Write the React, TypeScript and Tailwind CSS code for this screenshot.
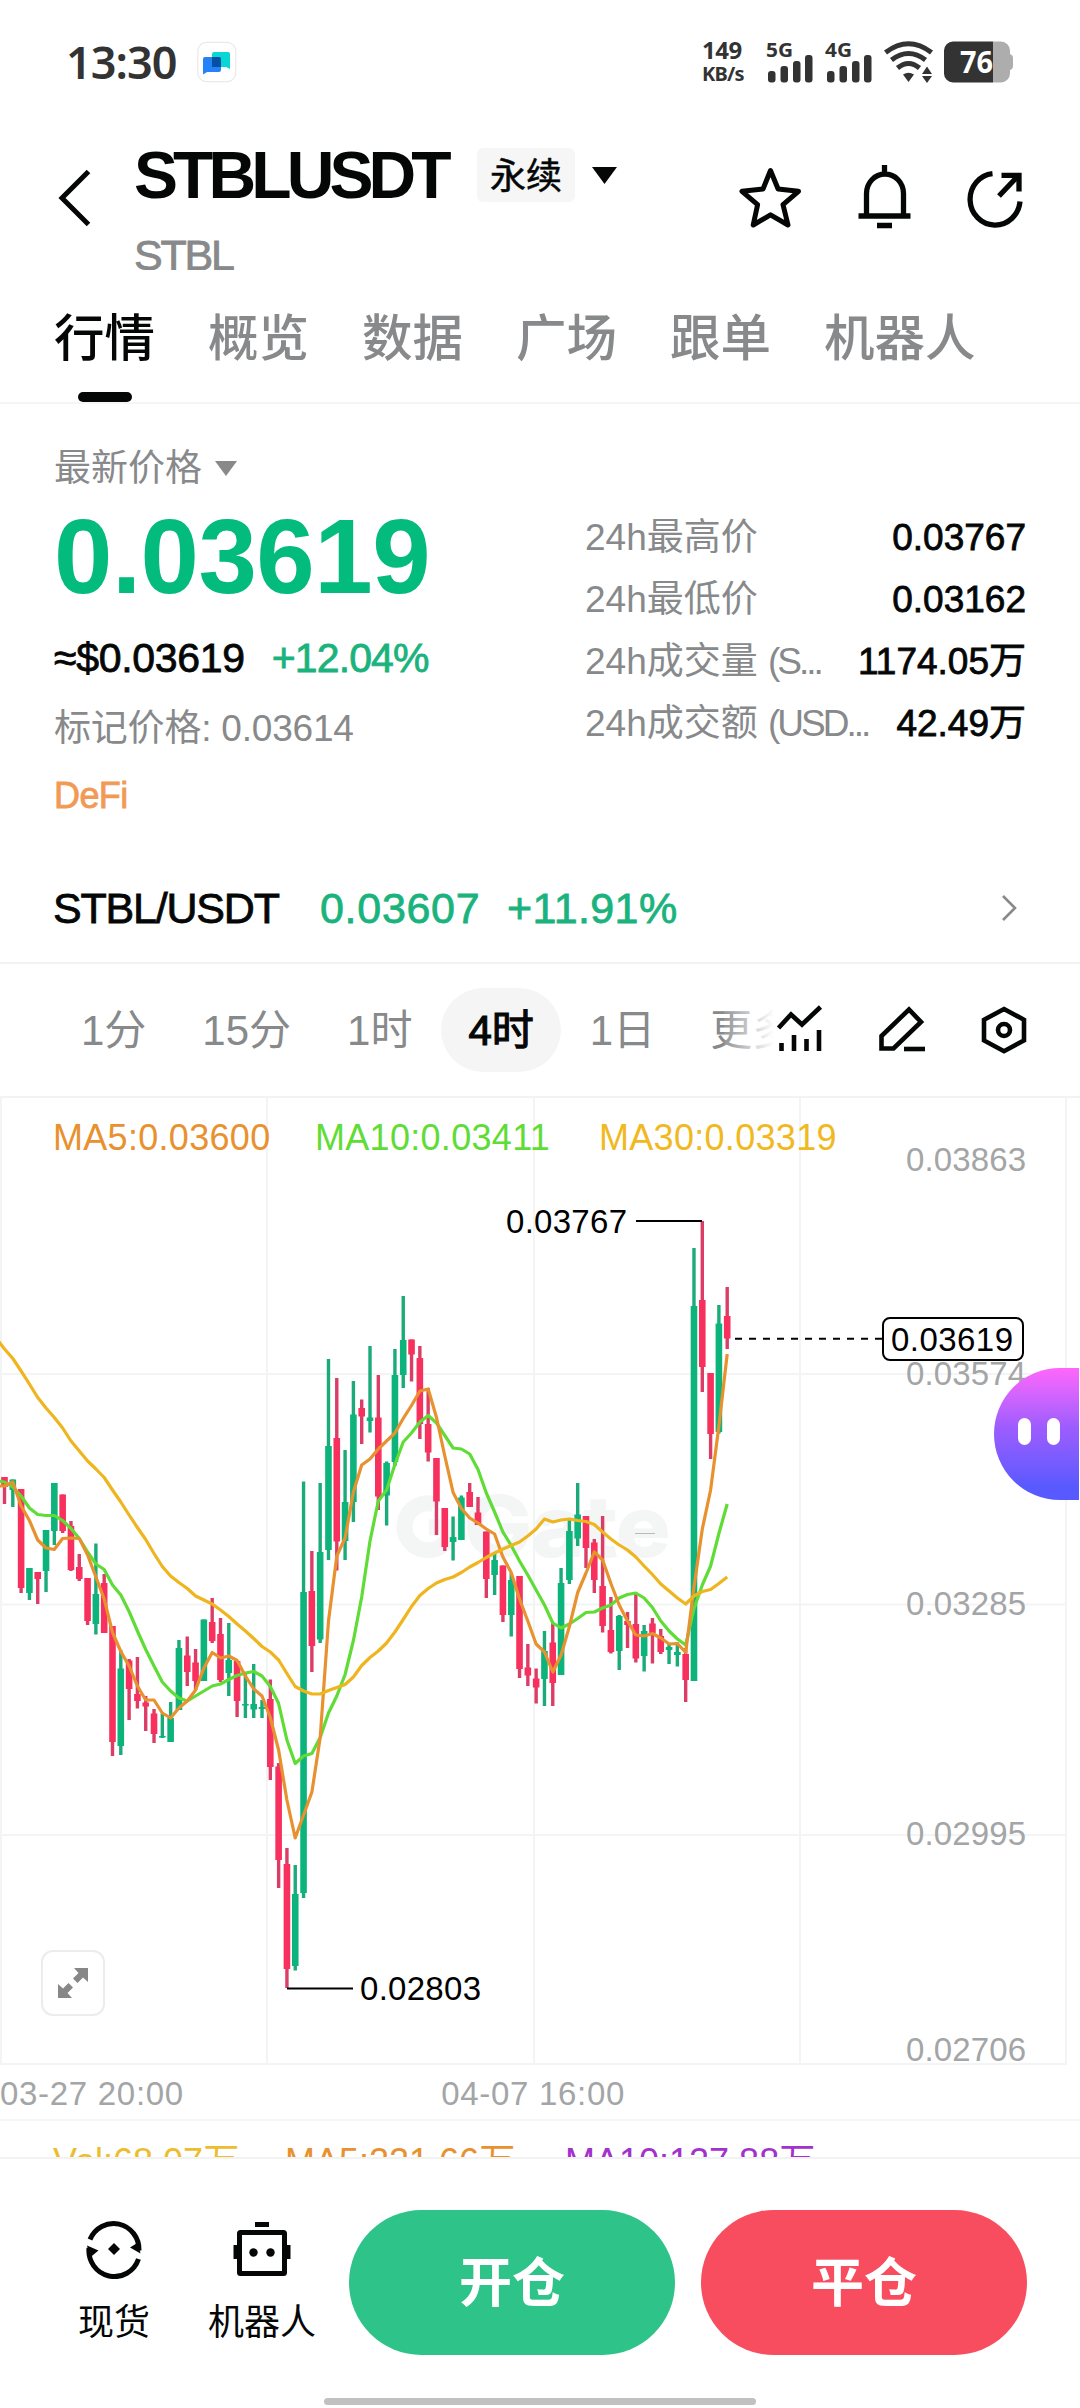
import React from 'react';
import clsx from 'clsx';

const UP = '#0cb47c';
const DOWN = '#f8305d';

// [direction, high, body top, body bottom, low]
type Candle = ['u' | 'd', number, number, number, number];

const CANDLES: Candle[] = [
  ['d', 1477, 1477, 1487, 1504], ['u', 1479.5, 1479.5, 1490, 1507], ['d', 1489, 1489, 1588, 1593], ['u', 1568, 1568, 1593, 1600],
  ['d', 1572, 1572, 1579, 1604], ['u', 1530, 1530, 1571, 1592], ['u', 1483, 1483, 1531, 1545], ['d', 1494.5, 1494.5, 1531, 1533],
  ['d', 1521, 1526, 1570, 1571], ['d', 1554, 1567, 1579, 1581], ['d', 1578, 1578, 1621, 1625], ['u', 1543.5, 1594, 1624, 1634.5],
  ['d', 1574, 1583, 1633, 1633], ['d', 1626, 1626, 1742, 1756], ['u', 1650, 1668.5, 1746, 1755], ['d', 1659, 1660.5, 1689, 1720],
  ['d', 1657, 1694, 1701, 1708.5], ['d', 1696, 1702.5, 1706.5, 1731], ['d', 1709, 1713.5, 1734, 1743], ['u', 1713.5, 1736, 1737.5, 1738],
  ['u', 1702, 1718, 1742, 1742], ['u', 1640, 1648, 1710, 1710], ['d', 1636.5, 1655.5, 1672, 1686], ['d', 1649, 1662.5, 1681, 1690],
  ['u', 1619.5, 1619.5, 1681, 1681], ['d', 1598, 1622, 1641, 1643], ['d', 1618, 1634, 1680, 1682], ['u', 1623, 1660, 1673, 1696],
  ['d', 1661, 1661, 1701, 1717], ['u', 1674, 1704, 1705.5, 1718], ['u', 1664, 1704, 1709.5, 1718], ['u', 1700, 1707, 1709, 1718],
  ['d', 1679.5, 1699, 1767, 1780], ['d', 1763, 1766.5, 1860, 1888], ['d', 1848, 1864, 1969, 1988], ['u', 1865, 1894, 1966, 1970.5],
  ['u', 1481.5, 1592, 1893, 1898], ['d', 1551, 1591, 1646, 1672], ['u', 1483, 1552, 1639.5, 1643], ['u', 1359, 1446, 1550, 1560],
  ['d', 1378, 1438, 1541.5, 1570.5], ['u', 1450, 1502, 1541, 1560], ['u', 1381, 1414.5, 1502, 1522], ['d', 1399.5, 1408, 1416.5, 1444],
  ['u', 1346, 1417.5, 1421, 1432.5], ['d', 1375, 1417.5, 1496.5, 1510], ['u', 1461.5, 1463, 1495.5, 1525.5], ['u', 1349, 1375, 1462, 1466],
  ['u', 1296, 1340, 1375, 1388], ['d', 1339.5, 1339.5, 1354.5, 1381.5], ['d', 1346, 1358, 1424, 1439], ['d', 1388, 1424, 1452.5, 1461.5],
  ['d', 1458, 1458, 1501.5, 1535], ['d', 1508, 1508, 1547, 1551], ['u', 1516.5, 1537, 1542, 1560.5], ['u', 1495.5, 1497.5, 1540, 1540],
  ['d', 1483, 1492, 1507, 1507], ['d', 1497, 1512.5, 1525, 1525], ['d', 1531.5, 1531.5, 1579, 1598], ['u', 1553, 1560, 1575, 1595],
  ['d', 1565.5, 1565.5, 1615, 1622], ['u', 1573, 1580, 1615, 1636.5], ['d', 1576, 1576, 1669, 1678], ['d', 1644, 1667.5, 1675.5, 1686],
  ['d', 1668.5, 1678.5, 1687.5, 1703.5], ['u', 1631, 1651, 1679, 1706], ['d', 1623, 1642.5, 1683, 1706], ['u', 1568, 1583, 1675, 1675],
  ['u', 1519, 1531, 1580, 1584], ['u', 1483, 1514.5, 1538.5, 1546], ['d', 1516, 1516, 1548, 1568], ['d', 1539, 1542.5, 1580, 1593],
  ['d', 1516, 1586, 1626, 1632.5], ['d', 1597, 1630, 1652, 1653.5], ['u', 1615, 1616, 1651, 1670], ['d', 1612, 1621, 1625, 1648],
  ['d', 1594, 1624, 1658.5, 1662.5], ['u', 1625, 1631, 1656, 1671.5], ['d', 1618, 1623.5, 1633, 1663.5], ['d', 1629, 1636, 1652, 1654],
  ['u', 1644, 1647, 1650, 1664], ['u', 1642.5, 1652, 1655, 1666.5], ['d', 1648, 1654, 1680, 1702], ['u', 1248, 1306, 1681, 1681],
  ['d', 1221, 1300, 1367, 1392], ['d', 1373, 1373, 1434, 1459], ['u', 1305, 1323.5, 1432, 1433.5], ['d', 1287, 1316, 1338.5, 1349],
];

const MA5 = [
  1486, 1482, 1506, 1520.5, 1540, 1548, 1549.5, 1538.5, 1538, 1538.5, 1555, 1577, 1599, 1632.5, 1651.5, 1666, 1686, 1700, 1700, 1713,
  1718, 1708, 1701, 1690, 1668, 1652.5, 1658, 1656, 1660.5, 1676, 1689, 1696, 1717.5, 1750, 1800, 1838, 1815, 1792, 1737.5, 1621,
  1556, 1538, 1492, 1465, 1459, 1449, 1441, 1433, 1418.5, 1405.5, 1391, 1389, 1417.5, 1456, 1492.5, 1508.5, 1518, 1523, 1529, 1534,
  1557, 1572.5, 1599, 1621, 1644, 1652, 1672, 1655, 1626.5, 1592.5, 1573, 1552, 1560, 1583.5, 1605, 1621, 1635, 1636, 1633.5, 1638,
  1644, 1643.5, 1652.5, 1587, 1529, 1490, 1426, 1354,
];

const MA10 = [
  1482, 1487, 1496, 1508, 1514.5, 1515.5, 1515.5, 1520.5, 1528.5, 1538.5, 1552, 1564, 1569.5, 1585, 1595, 1611.5, 1631, 1649.5, 1666, 1682,
  1691, 1698, 1701, 1696, 1691, 1686, 1684, 1679.5, 1675.5, 1673, 1671.5, 1676, 1686.5, 1703.5, 1740, 1763.5, 1756, 1753.5, 1737.5, 1713,
  1696, 1674.5, 1640.5, 1597, 1541, 1501, 1490, 1464.5, 1442, 1433, 1422, 1415.5, 1423, 1435.5, 1448, 1449, 1454, 1469.5, 1493, 1512,
  1532, 1545.5, 1561, 1575, 1590, 1605, 1623, 1628, 1624, 1618.5, 1612.5, 1612, 1608, 1605, 1598, 1594.5, 1593, 1598, 1607.5, 1621,
  1631, 1639, 1645, 1608.5, 1585, 1566, 1533.5, 1504,
];

const MA30 = [
  1349, 1358.5, 1371, 1384, 1397.5, 1408, 1417.5, 1428, 1441, 1451, 1461, 1469, 1477.5, 1490, 1502, 1515, 1527.5, 1539.5, 1553.5, 1566.5,
  1576, 1582.5, 1588.5, 1596, 1600, 1604, 1610, 1616.5, 1624, 1631, 1638.5, 1646.5, 1652, 1660, 1673.5, 1686.5, 1691, 1694, 1694, 1690.5,
  1687.5, 1684.5, 1677, 1665.5, 1657.5, 1651, 1643, 1632, 1619.5, 1606.5, 1595.5, 1588.5, 1583, 1579.5, 1577, 1572.5, 1567, 1562.5, 1557.5, 1553,
  1549, 1545.5, 1542, 1536, 1529, 1519, 1522, 1520, 1519, 1520.5, 1521.5, 1524.5, 1532, 1539, 1545, 1550, 1557, 1566, 1574.5, 1584,
  1591, 1598, 1604, 1596, 1591.5, 1589.5, 1583.5, 1577,
];

const candleX = (i: number) => 4.5 + i * 8.307;

const toPoints = (values: number[], start: number) =>
  [`-4,${start}`, ...values.map((y, i) => `${candleX(i).toFixed(1)},${y}`)].join(' ');

const AXIS = [
  { label: '0.03863', y: 1159 },
  { label: '0.03574', y: 1373 },
  { label: '0.03285', y: 1603 },
  { label: '0.02995', y: 1833 },
  { label: '0.02706', y: 2049 },
];

const TABS = ['行情', '概览', '数据', '广场', '跟单', '机器人'];
const INTERVALS = ['1分', '15分', '1时', '4时', '1日'];

const STATS = [
  { label: '24h最高价', unit: '', value: '0.03767' },
  { label: '24h最低价', unit: '', value: '0.03162' },
  { label: '24h成交量 ', unit: '(S...', value: '1174.05万' },
  { label: '24h成交额 ', unit: '(USD...', value: '42.49万' },
];

function SignalBars({ label }: { label: string }) {
  return (
    <svg width="50" height="54" viewBox="0 -6 50 54" fill="#333">
      <text x="0" y="15.5" fontSize="20" fontWeight="700" fontFamily="Noto Sans" textLength="27" lengthAdjust="spacingAndGlyphs">{label}</text>
      <rect x="2" y="30" width="7.5" height="11.5" rx="3" />
      <rect x="14.5" y="25" width="7.5" height="16.5" rx="3" />
      <rect x="27" y="20" width="7.5" height="21.5" rx="3" />
      <rect x="39" y="14" width="7.5" height="27.5" rx="3" />
    </svg>
  );
}

function StatusBar() {
  return (
    <div className="flex h-[124px] items-center pl-[66px] pr-[65px] text-[#333]">
      <span className="w-[113px] whitespace-nowrap font-['Noto_Sans'] text-[45px] font-semibold leading-[60px] tracking-[-1px]">13:30</span>
      <svg className="ml-[18px]" width="40" height="42" viewBox="0 0 40 42">
        <rect x="0.8" y="1.3" width="38" height="39.4" rx="9" fill="#fff" stroke="#e9e9e9" strokeWidth="1.2" />
        <path d="M17 11h14a2 2 0 0 1 2 2v15l-4-2H15V13a2 2 0 0 1 2-2z" fill="#0ad6d6" />
        <path d="M8 16h14a2 2 0 0 1 2 2v11a2 2 0 0 1-2 2H10l-4 2.500V18a2 2 0 0 1 2-2z" fill="#2483f8" />
        <path d="M15 16h7a2 2 0 0 1 2 2v8h-9z" fill="#074fa3" />
      </svg>
      <div className="ml-auto flex items-center">
        <div className="flex w-[46px] flex-col whitespace-nowrap font-['Noto_Sans'] font-bold">
          <span className="text-[24px] leading-[24px] tracking-[-0.5px]">149</span>
          <span className="text-[20px] leading-[24px] tracking-[-0.8px]">KB/s</span>
        </div>
        <div className="ml-[18px] flex gap-[9px]">
          <SignalBars label="5G" />
          <SignalBars label="4G" />
        </div>
        <svg className="ml-[9px]" width="50" height="42" viewBox="0 0 50 42" fill="none" stroke="#333" strokeWidth="5">
          <path d="M1.500 11.500Q24.500-6 47.500 11.500" />
          <path d="M7.500 19Q24.500 6 41.500 19" />
          <path d="M13.500 27Q24.500 18 35.500 27" />
          <path d="M19 33.500Q24.500 30 30 33.500L24.500 41z" fill="#333" stroke="none" />
          <path d="M38 33h10l-5-7.500zM38 35h10l-5 7z" fill="#333" stroke="none" />
        </svg>
        <svg className="ml-[9px]" width="72" height="42" viewBox="0 0 72 42">
          <path d="M50 0.500h8a9 9 0 0 1 9 9v3.500q3 1 3 4v8q0 3-3 4v3.500a9 9 0 0 1-9 9h-8z" fill="#adadad" />
          <path d="M10 0.500h40v41H10a9 9 0 0 1-9-9v-23a9 9 0 0 1 9-9z" fill="#333" />
          <text x="17" y="32" fontSize="30" fontWeight="700" fill="#fff" fontFamily="Noto Sans" textLength="33" lengthAdjust="spacingAndGlyphs">76</text>
        </svg>
      </div>
    </div>
  );
}

function Header() {
  return (
    <header className="flex h-[146px] items-center pl-[57px] pr-[55px]">
      <svg width="36" height="60" viewBox="0 0 36 60" fill="none" stroke="#050707" strokeWidth="5">
        <path d="M31.500 4.500L5 31L31.500 57.500" />
      </svg>
      <div className="ml-[41px] flex h-[146px] flex-col overflow-hidden">
        <div className="flex h-[102px] items-center">
          <h1 className="w-[319px] whitespace-nowrap text-[66px] font-bold leading-[102px] tracking-[-4.900px] text-[#050707]">STBLUSDT</h1>
          <span className="ml-6 flex h-[54px] w-[98px] items-center justify-center rounded-md bg-[#f6f6f6] pt-[3px] text-[36px] [-webkit-text-stroke:0.5px_#050707]">永续</span>
          <svg className="ml-[17px]" width="25" height="17" viewBox="0 0 25 17" fill="#050707">
            <path d="M0 0h25L12.500 17z" />
          </svg>
        </div>
        <span className="text-[43px] leading-[58px] tracking-[-2.200px] text-[#87898b] [-webkit-text-stroke:0.8px_#87898b]">STBL</span>
      </div>
      <div className="ml-auto flex items-center gap-[54px]">
        <svg width="64" height="64" viewBox="0 0 64 64" fill="none" stroke="#050707" strokeWidth="5" strokeLinejoin="round">
          <path d="M32.500 5.500l7.600 18.500 20.400 2.300-15.500 13.400 5 20.300L32.500 49.800 15.200 60l4.400-20.300L4 26.300 25 24z" />
        </svg>
        <svg width="56" height="64" viewBox="0 0 56 64" fill="none" stroke="#050707" strokeWidth="5.300">
          <path d="M28.500 0v8M10.500 51V28.500a18.500 19.500 0 0 1 37 0V51M2.500 51h52M21 60.500h15" />
        </svg>
        <svg width="59" height="64" viewBox="0 0 59 64" fill="none" stroke="#050707" strokeWidth="5.300">
          <path d="M26.500 8.600A25 25.800 0 1 0 54 36.500" />
          <path d="M35.500 10.300H53V26.500" />
          <path d="M52 11L33 31" />
        </svg>
      </div>
    </header>
  );
}

function MainTabs() {
  return (
    <nav className="flex h-[134px] gap-[53px] border-b-2 border-[#f5f5f6] pl-[54px] pt-[37px] text-[50.500px] font-medium leading-[64px] text-[#87898b]">
      {TABS.map((tab, i) => (
        <div key={tab} className={clsx('flex flex-col items-center', i === 0 && 'text-[#050707]')}>
          <span className="whitespace-nowrap">{tab}</span>
          {i === 0 && <span className="mt-[21px] h-[10px] w-[54px] rounded-full bg-[#050707]" />}
        </div>
      ))}
    </nav>
  );
}

function PriceSummary() {
  return (
    <section className="flex h-[450px] justify-between pl-[54px] pr-[54px] pt-[40px]">
      <div className="flex flex-col whitespace-nowrap">
        <div className="flex h-[46px] items-center text-[37px] leading-[46px] text-[#87898b]">
          <span className="pt-[4px]">最新价格</span>
          <svg className="ml-[13px] mt-[2px]" width="22" height="15" viewBox="0 0 22 15" fill="#87898b">
            <path d="M0 0h22L11 15z" />
          </svg>
        </div>
        <span className="text-[105px] font-bold leading-[134px] tracking-[-0.5px] text-[#02bb7c]">0.03619</span>
        <div className="flex h-[66px] gap-[27px] pt-px text-[41px] leading-[66px] tracking-[-0.300px]">
          <span className="[-webkit-text-stroke:0.8px_#050707]">≈$0.03619</span>
          <span className="tracking-[-0.9px] text-[#1ab37d] [-webkit-text-stroke:0.8px_#1ab37d]">+12.04%</span>
        </div>
        <span className="pt-[2px] text-[37px] leading-[74px] tracking-[-0.200px] text-[#87898b]">标记价格: 0.03614</span>
        <span className="text-[36px] leading-[60px] tracking-[-0.6px] text-[#f19a55] [-webkit-text-stroke:0.8px_#f19a55]">DeFi</span>
      </div>
      <div className="mt-[63px] flex w-[441px] flex-col text-[37px]">
        {STATS.map((s) => (
          <div key={s.label} className="flex justify-between whitespace-pre leading-[62px]">
            <span className="text-[#87898b]">
              {s.label}
              {s.unit && <span className="tracking-[-3px]">{s.unit}</span>}
            </span>
            <span className="[-webkit-text-stroke:0.8px_#050707]">{s.value}</span>
          </div>
        ))}
      </div>
    </section>
  );
}

function SpotRow() {
  return (
    <div className="flex h-[110px] items-center border-b-2 border-[#f3f3f4] pl-[53px] pr-[62px] text-[43px]">
      <span className="w-[267px] tracking-[-1.2px] [-webkit-text-stroke:0.8px_#050707]">STBL/USDT</span>
      <span className="w-[187px] tracking-[0.7px] text-[#1ab37d] [-webkit-text-stroke:0.8px_#1ab37d]">0.03607</span>
      <span className="tracking-[0.400px] text-[#1ab37d] [-webkit-text-stroke:0.8px_#1ab37d]">+11.91%</span>
      <svg className="ml-auto" width="18" height="28" viewBox="0 0 18 28" fill="none" stroke="#87898b" strokeWidth="2.600">
        <path d="M3 2L15 14L3 26" />
      </svg>
    </div>
  );
}

function IntervalBar() {
  return (
    <div className="flex h-[134px] items-center border-b-2 border-[#f3f3f4] pl-[54px] pr-[52px] text-[42px] text-[#87898b]">
      <div className="relative flex w-[720px] gap-[2px] overflow-hidden">
        {INTERVALS.map((label) => (
          <span
            key={label}
            className={clsx(
              'flex h-[84px] shrink-0 items-center rounded-full px-[27px]',
              label === '4时' && 'bg-[#f5f5f5] text-[#050707] [-webkit-text-stroke:1.2px_#050707]',
            )}
          >
            {label}
          </span>
        ))}
        <span className="flex h-[84px] shrink-0 items-center pl-[26px]">更多</span>
        <div className="absolute right-0 top-0 h-full w-[50px] bg-linear-to-r from-white/10 to-white" />
      </div>
      <div className="ml-auto flex items-center gap-[54px]">
        <svg width="48" height="50" viewBox="0 0 48 50" fill="none" stroke="#050707" strokeWidth="4.600">
          <path d="M2.500 23L15 9.500L26 19.500L44.500 2" />
          <path d="M5.500 38v8M18 30v16M30.500 34v12M43 25v21" />
        </svg>
        <svg width="48" height="50" viewBox="0 0 48 50" fill="none" stroke="#050707" strokeWidth="4.600">
          <path d="M3.500 43.500V31L31 4.500L43 17L15.500 43.500z" />
          <path d="M26 44h21" />
        </svg>
        <svg width="48" height="50" viewBox="0 0 48 50" fill="none" stroke="#050707" strokeWidth="4.600">
          <path d="M24 4l20 10.800v20.600L24 46.200 4 35.400V14.800z" />
          <circle cx="24" cy="25" r="6" />
        </svg>
      </div>
    </div>
  );
}

function Chart() {
  return (
    <svg className="block" width="1080" height="967" viewBox="0 1098 1080 967" fontFamily="Liberation Sans" fontSize="33">
      <g stroke="#f3f4f5" strokeWidth="2">
        {[1, 267, 534, 800, 1066].map((x) => <line key={x} x1={x} x2={x} y1="1098" y2="2065" />)}
        {[1374, 1604.5, 1835, 2064].map((y) => <line key={y} x1="0" x2="1066" y1={y} y2={y} />)}
      </g>

      {/* watermark */}
      <path d="M434 1504a23.500 23.500 0 1 0 17.500 23.500H429" fill="none" stroke="#f4f5f5" strokeWidth="16" />
      <text x="464" y="1556" fontSize="82" fontWeight="700" fill="#f4f5f5" stroke="#f4f5f5" strokeWidth="2" fontFamily="Inter" textLength="206" lengthAdjust="spacingAndGlyphs">Gate</text>
      <line x1="635" x2="655" y1="1533.500" y2="1533.500" stroke="#b9bbbb" />

      {AXIS.map((a) => (
        <text key={a.label} x="906" y={a.y + 11.5} textLength="120" fill="#a3a5a6">{a.label}</text>
      ))}

      {CANDLES.map(([dir, high, top, bottom, low], i) => {
        const x = candleX(i);
        const color = dir === 'u' ? UP : DOWN;
        return (
          <g key={i} fill={color}>
            <rect x={x - 1.7} y={high} width="3.4" height={low - high} fill={dir === 'u' ? '#1bab79' : '#dc3d66'} />
            <rect x={x - 3.3} y={top} width="6.6" height={bottom - top} />
          </g>
        );
      })}

      <g fill="none" strokeWidth="3.200" strokeLinejoin="round">
        <polyline points={toPoints(MA10, 1481)} stroke="#5fdc35" />
        <polyline points={toPoints(MA5, 1486)} stroke="#e8912f" />
        <polyline points={toPoints(MA30, 1338)} stroke="#efb51f" />
      </g>

      <path d="M636 1221h66M287 1988.500h66" stroke="#000" strokeWidth="2" />
      <text x="506" y="1232.500" textLength="121">0.03767</text>
      <text x="360" y="2000" textLength="121">0.02803</text>

      <path d="M735 1338.700h147" stroke="#000" strokeWidth="2" strokeDasharray="7 7" />
      <rect x="883" y="1318" width="140" height="42" rx="7" fill="#fff" stroke="#000" strokeWidth="2" />
      <text x="891" y="1350.500" textLength="122">0.03619</text>
    </svg>
  );
}

function ChartPanel() {
  return (
    <section className="relative h-[1059px] overflow-hidden">
      <Chart />
      <div className="absolute left-[53px] top-[16px] flex text-[36px] leading-[48px]">
        <span className="w-[262px] tracking-[0.300px] text-[#e8912f]">MA5:0.03600</span>
        <span className="w-[284px] tracking-[0.300px] text-[#5fdc35]">MA10:0.03411</span>
        <span className="tracking-[0.300px] text-[#f0b921]">MA30:0.03319</span>
      </div>
      <button className="absolute left-[41px] top-[852px] flex h-[66px] w-[64px] items-center justify-center rounded-[12px] border-[2.500px] border-[#ececec] bg-white">
        <svg width="32" height="32" viewBox="0 0 32 32" fill="#878787">
          <path d="M17 1h14v14l-5-4.500-5.500 5.500-4.500-4.500L21.500 6zM1 31V17l5 4.500 5.500-5.500 4.500 4.500L10.500 26l4.500 5z" />
        </svg>
      </button>
      <div className="absolute right-[1px] top-[270px] flex h-[132px] w-[85px] items-center gap-[16px] rounded-l-full bg-linear-to-b from-[#ff66fb] via-[#9d5cff] via-45% to-[#5859ff] to-90% pb-[6px] pl-[24px]">
        <span className="h-[27px] w-[13px] rounded-full bg-white" />
        <span className="h-[27px] w-[13px] rounded-full bg-white" />
      </div>
      <div className="flex h-[56px] justify-between border-b-2 border-[#f5f5f6] text-[33px] leading-[57px] tracking-[0.700px] text-[#a3a5a6]">
        <span>03-27 20:00</span>
        <span className="mr-[455px]">04-07 16:00</span>
      </div>
      <div className="flex pl-[53px] pt-[19px] text-[36px] leading-[44px]">
        <span className="w-[232px] text-[#ecbd2f]">Vol:68.07万</span>
        <span className="w-[280px] text-[#e8912f]">MA5:221.66万</span>
        <span className="text-[#a331cc]">MA10:127.88万</span>
      </div>
    </section>
  );
}

function BottomBar() {
  return (
    <footer className="flex h-[251px] flex-col border-t-2 border-[#f1f2f2]">
      <div className="flex pl-[78px] pt-[51px] text-[36px]">
        <div className="flex w-[72px] flex-col items-center pt-[9px]">
          <svg width="58" height="60" viewBox="0 0 58 60" fill="none" stroke="#050707" strokeWidth="5">
            <path d="M5 20.500A25.500 26 0 0 1 54 31.500" />
            <path d="M53.500 40A25.500 26 0 0 1 4 29" />
            <path d="M55.500 34.500L45 28.500l8-5zM2 26.500l11.500 5-8.500 7z" fill="#050707" stroke="none" />
            <path d="M29 24l6 6-6 6-6-6z" fill="#050707" stroke="none" />
          </svg>
          <span className="mt-[18px] whitespace-nowrap leading-[52px]">现货</span>
        </div>
        <div className="ml-[58px] flex w-[108px] flex-col items-center pt-[9px]">
          <svg width="58" height="60" viewBox="0 0 58 60" fill="none" stroke="#050707" strokeWidth="5">
            <rect x="6.500" y="13.500" width="45" height="41" rx="1" />
            <path d="M22 5.500h14M3 26v14M55 26v14" />
            <circle cx="20.500" cy="33.500" r="4.200" fill="#050707" stroke="none" />
            <circle cx="37.500" cy="33.500" r="4.200" fill="#050707" stroke="none" />
          </svg>
          <span className="mt-[18px] whitespace-nowrap leading-[52px]">机器人</span>
        </div>
        <button className="ml-[33px] h-[145px] w-[326px] rounded-full bg-[#2dc389] pt-[2px] text-[53px] font-bold text-white">开仓</button>
        <button className="ml-[26px] h-[145px] w-[326px] rounded-full bg-[#f74d5f] pt-[2px] text-[53px] font-bold text-white">平仓</button>
      </div>
      <div className="mt-[43px] h-[7px] w-[432px] self-center rounded-full bg-[#c1c1c1]" />
    </footer>
  );
}

export default function App() {
  return (
    <div className="flex h-[2408px] w-[1080px] flex-col overflow-hidden bg-white font-['Liberation_Sans','Noto_Sans_CJK_SC',sans-serif] text-[#050707]">
      <StatusBar />
      <Header />
      <MainTabs />
      <PriceSummary />
      <SpotRow />
      <IntervalBar />
      <ChartPanel />
      <BottomBar />
    </div>
  );
}
